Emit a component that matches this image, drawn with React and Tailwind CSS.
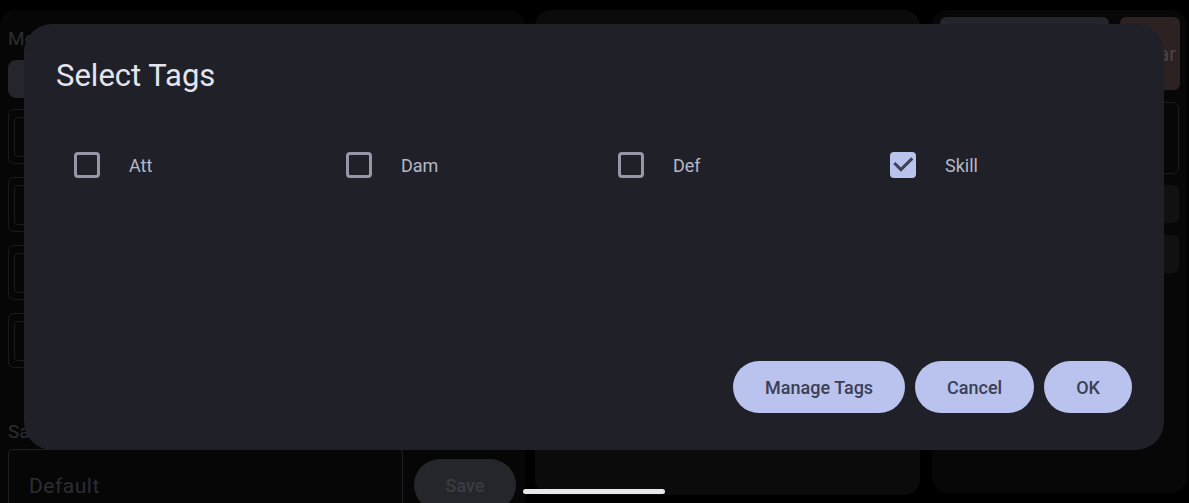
import { useState } from "react";

const TAGS = [
  { name: "Att", checked: false },
  { name: "Dam", checked: false },
  { name: "Def", checked: false },
  { name: "Skill", checked: true },
];

function Checkbox({ checked }) {
  if (checked) {
    return (
      <div className="flex h-[26px] w-[26px] shrink-0 items-center justify-center rounded-[4px] bg-[#b9c3ee]">
        <svg width="26" height="26" viewBox="0 0 26 26" fill="none">
          <path
            d="M5.4 12 L10.9 17.6 L21.2 7.4"
            stroke="#3d4257"
            strokeWidth="3"
            strokeLinecap="square"
          />
        </svg>
      </div>
    );
  }
  return <div className="h-[26px] w-[26px] shrink-0 rounded-[4px] border-[3px] border-[#9597a9]" />;
}

function BackgroundApp() {
  return (
    <div className="flex h-full pt-[10px]">
      {/* left panel */}
      <div className="flex w-[525px] shrink-0 flex-col overflow-hidden rounded-t-2xl bg-[#060606] pl-2 pr-[10px]">
        <div className="mt-[17px] shrink-0 text-[19px] leading-6 text-[#2d2e33]">Mode</div>
        <div className="mt-[9px] h-[38px] w-[300px] shrink-0 rounded-lg bg-[#24262b]" />
        <div className="mt-[11px] flex shrink-0 flex-col gap-[13px]">
          {[0, 1, 2, 3].map((i) => (
            <div key={i} className="h-[55px] shrink-0 rounded-md border border-[#1a1a1d] p-[7px] pl-[5px]">
              <div className="h-[40px] w-[200px] rounded border border-[#1a1a1d]" />
            </div>
          ))}
        </div>
        <div className="mt-[52px] shrink-0 text-[19px] leading-6 text-[#2d2e33]">Save as</div>
        <div className="mt-[5px] flex shrink-0 items-start gap-[11px]">
          <div className="h-[64px] w-[395px] shrink-0 rounded border border-[#1e1e22] px-5 pt-[24px] text-[21px] leading-6 tracking-wide text-[#2b2d33]">
            Default
          </div>
          <div className="mt-[10px] flex h-[52px] w-[102px] shrink-0 items-center justify-center rounded-full bg-[#24262b] text-[18px] font-medium text-[#3a3c42]">
            Save
          </div>
        </div>
      </div>
      {/* middle panel */}
      <div className="ml-[10px] h-[485px] w-[385px] shrink-0 rounded-2xl bg-[#0b0b0b]" />
      {/* right panel */}
      <div className="ml-[12px] flex h-[483px] w-[255px] shrink-0 flex-col rounded-2xl bg-[#070707] px-[8px] pt-[7px]">
        <div className="flex shrink-0 gap-[11px]">
          <div className="h-[73px] w-[169px] shrink-0 rounded-md bg-[#23252a]" />
          <div className="flex h-[73px] w-[60px] shrink-0 items-center justify-end rounded-md bg-[#2c2222] pr-[4px] text-[20px] text-[#4a4646]">
            Clear
          </div>
        </div>
        <div className="mt-[12px] h-[72px] shrink-0 rounded-md border border-[#1c1c20]" />
        <div className="mt-[11px] h-[38px] shrink-0 rounded-md bg-[#111113]" />
        <div className="mt-[12px] h-[38px] shrink-0 rounded-md bg-[#111113]" />
      </div>
    </div>
  );
}

export default function App() {
  const [tags] = useState(TAGS);

  return (
    <div
      className="relative h-[503px] w-[1189px] overflow-hidden bg-black"
      style={{ fontFamily: "Roboto, 'Noto Sans', sans-serif" }}
    >
      <BackgroundApp />

      {/* dialog */}
      <div className="absolute left-[24px] top-[24px] flex h-[426px] w-[1140px] flex-col rounded-[28px] bg-[#1f2028] px-8 pb-[37px] pt-8">
        <h1 className="text-[31px] leading-10 text-[#e3e4ee]">Select Tags</h1>
        <div className="mt-[45px] grid grid-cols-[repeat(4,272px)]">
          {tags.map((t) => (
            <div key={t.name} className="flex h-12 items-center pl-[18px]">
              <Checkbox checked={t.checked} />
              <span className="ml-[29px] text-[18px] text-[#b6b8c7]">{t.name}</span>
            </div>
          ))}
        </div>
        <div className="flex-1" />
        <div className="flex justify-end gap-[10px]">
          <button className="h-[52px] rounded-full bg-[#b9c3ee] px-8 text-[18px] font-medium text-[#3b4055]">
            Manage Tags
          </button>
          <button className="h-[52px] rounded-full bg-[#b9c3ee] px-8 text-[18px] font-medium text-[#3b4055]">
            Cancel
          </button>
          <button className="h-[52px] rounded-full bg-[#b9c3ee] px-8 text-[18px] font-medium text-[#3b4055]">
            OK
          </button>
        </div>
      </div>

      {/* home indicator */}
      <div className="absolute left-[523px] top-[489px] h-[5px] w-[142px] rounded-full bg-[#e6e6ec]" />
    </div>
  );
}
